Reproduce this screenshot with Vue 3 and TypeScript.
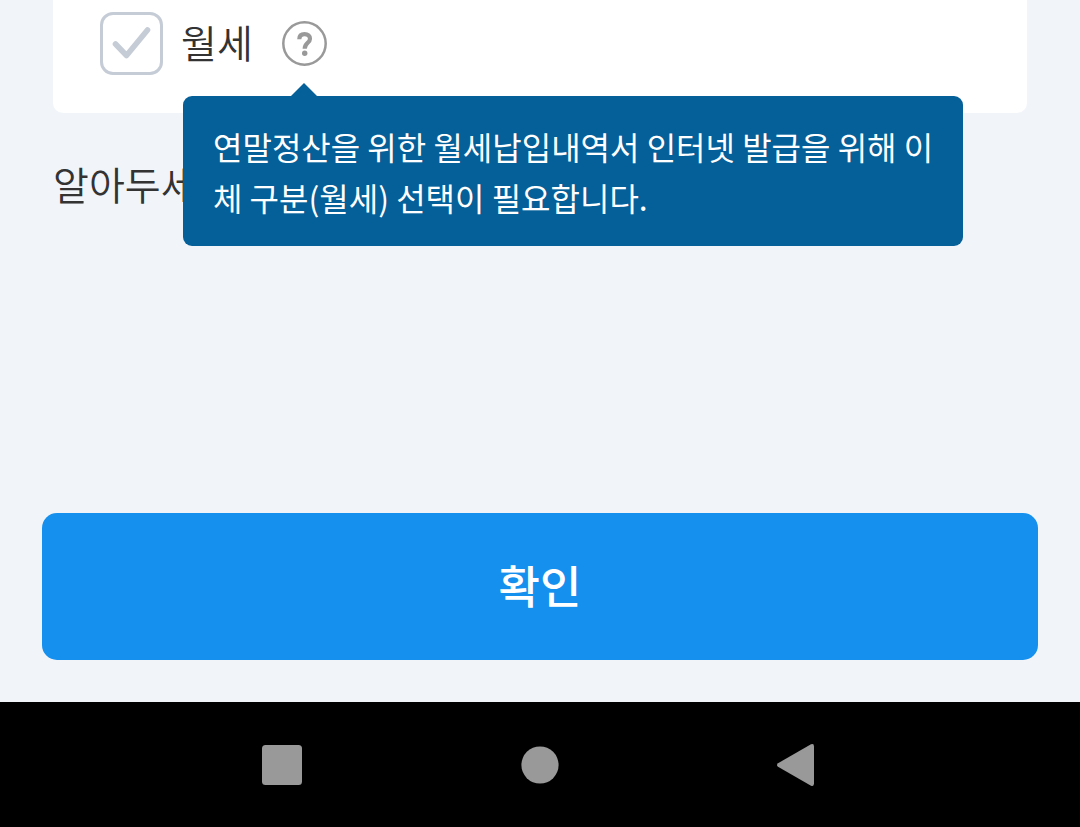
<script setup lang="ts">
import { ref } from 'vue'

const isRent = ref<boolean>(false)
const tooltipOpen = ref<boolean>(true)

const toggleTooltip = (): void => {
  tooltipOpen.value = !tooltipOpen.value
}
</script>

<template>
  <div class="screen">
    <main class="content">
      <section class="card">
        <label class="option">
          <span class="check">
            <input v-model="isRent" type="checkbox" class="check-input" />
            <svg class="check-mark" viewBox="0 0 63 63" aria-hidden="true">
              <path d="M15.5 32 26.5 43.5 47.5 18" />
            </svg>
          </span>
          <span class="option-text">월세</span>
        </label>
        <button
          type="button"
          class="help"
          aria-label="월세 도움말"
          aria-describedby="rent-tooltip"
          @click="toggleTooltip"
        >
          <svg viewBox="0 0 45 45" aria-hidden="true">
            <circle class="help-ring" cx="22.5" cy="22.5" r="21.2" />
            <path class="help-hook" d="M17.3 18.2C17.3 14.9 19.4 13.1 22.6 13.1C25.9 13.1 28 14.9 28 17.7C28 21.8 22.7 22 22.7 27.7" />
            <circle class="help-dot" cx="22.7" cy="32.2" r="2.7" />
          </svg>
        </button>
        <div v-if="tooltipOpen" id="rent-tooltip" class="tooltip" role="tooltip">
          연말정산을 위한 월세납입내역서 인터넷 발급을 위해 이체 구분(월세) 선택이 필요합니다.
        </div>
      </section>
      <h2 class="notice">알아두세요</h2>
    </main>

    <footer class="actions">
      <button type="button" class="confirm">확인</button>
    </footer>

    <nav class="system-bar">
      <button type="button" class="system-key" aria-label="최근 앱">
        <svg viewBox="0 0 44 44" aria-hidden="true"><rect x="2" y="2" width="40" height="40" rx="3.5" /></svg>
      </button>
      <button type="button" class="system-key" aria-label="홈">
        <svg viewBox="0 0 44 44" aria-hidden="true"><circle cx="22" cy="22" r="18.6" /></svg>
      </button>
      <button type="button" class="system-key" aria-label="뒤로">
        <svg viewBox="0 0 44 44" aria-hidden="true">
          <path d="M2 20.2 35 1.3Q38 0 38 3.4V40.6Q38 44 35 42.7L2 23.8Q0 22 2 20.2Z" />
        </svg>
      </button>
    </nav>
  </div>
</template>

<style>
body {
  margin: 0;
  background: #f1f5fa;
}
</style>

<style scoped>
.screen {
  display: flex;
  flex-direction: column;
  min-height: 100vh;
  background: #f1f5fa;
  color: #333;
  font-family: 'Noto Sans CJK KR', 'Noto Sans', sans-serif;
  font-weight: 350;
}

button {
  margin: 0;
  padding: 0;
  border: 0;
  background: none;
  font-family: inherit;
  cursor: pointer;
}

svg {
  display: block;
  width: 100%;
  height: 100%;
}

.content {
  flex: 1;
  padding: 0 53px;
}

.card {
  position: relative;
  display: flex;
  align-items: center;
  gap: 29px;
  padding: 12px 47px 38px;
  border-radius: 0 0 10px 10px;
  background: #fff;
}

.option {
  display: flex;
  align-items: center;
  gap: 18px;
  font-size: 39px;
  line-height: 56px;
  cursor: pointer;
}

.option-text {
  padding-bottom: 6px;
}

.check {
  position: relative;
  width: 63px;
  height: 63px;
}

.check-input {
  display: block;
  box-sizing: border-box;
  width: 100%;
  height: 100%;
  margin: 0;
  border: 3px solid #c5ccd6;
  border-radius: 13px;
  background: #fff;
  appearance: none;
}

.check-mark {
  position: absolute;
  inset: 0;
  fill: none;
  stroke: #c5ccd6;
  stroke-width: 5.6;
  stroke-linecap: round;
  stroke-linejoin: round;
  pointer-events: none;
}

.check-input:checked {
  border-color: #1590ef;
}

.check-input:checked + .check-mark {
  stroke: #1590ef;
}

.help {
  width: 45px;
  height: 45px;
}

.help-ring,
.help-hook {
  fill: none;
  stroke: #999;
}

.help-ring {
  stroke-width: 2.5;
}

.help-hook {
  stroke-width: 4.2;
}

.help-dot {
  fill: #999;
}

.tooltip {
  position: absolute;
  top: 96px;
  left: 130px;
  right: 64px;
  z-index: 1;
  padding: 25px 20px 23px 30px;
  border-radius: 9px;
  background: #055f98;
  color: #fff;
  font-size: 32px;
  font-weight: 400;
  line-height: 51px;
  word-break: normal;
}

.tooltip::before {
  content: '';
  position: absolute;
  bottom: 100%;
  left: 108px;
  border: solid transparent;
  border-width: 0 13px 13px;
  border-bottom-color: #055f98;
}

.notice {
  margin: 40px 0 0;
  font-size: 39px;
  font-weight: 350;
  line-height: 60px;
}

.actions {
  padding: 0 42px 42px;
}

.confirm {
  display: block;
  width: 100%;
  padding: 40px 0 44px;
  border-radius: 15px;
  background: #1590ef;
  color: #fff;
  font-size: 45px;
  font-weight: 500;
  line-height: 63px;
}

.system-bar {
  display: flex;
  justify-content: center;
  gap: 214px;
  padding: 41px 0 40px;
  background: #000;
}

.system-key {
  width: 44px;
  height: 44px;
}

.system-key svg {
  fill: #999;
}
</style>
